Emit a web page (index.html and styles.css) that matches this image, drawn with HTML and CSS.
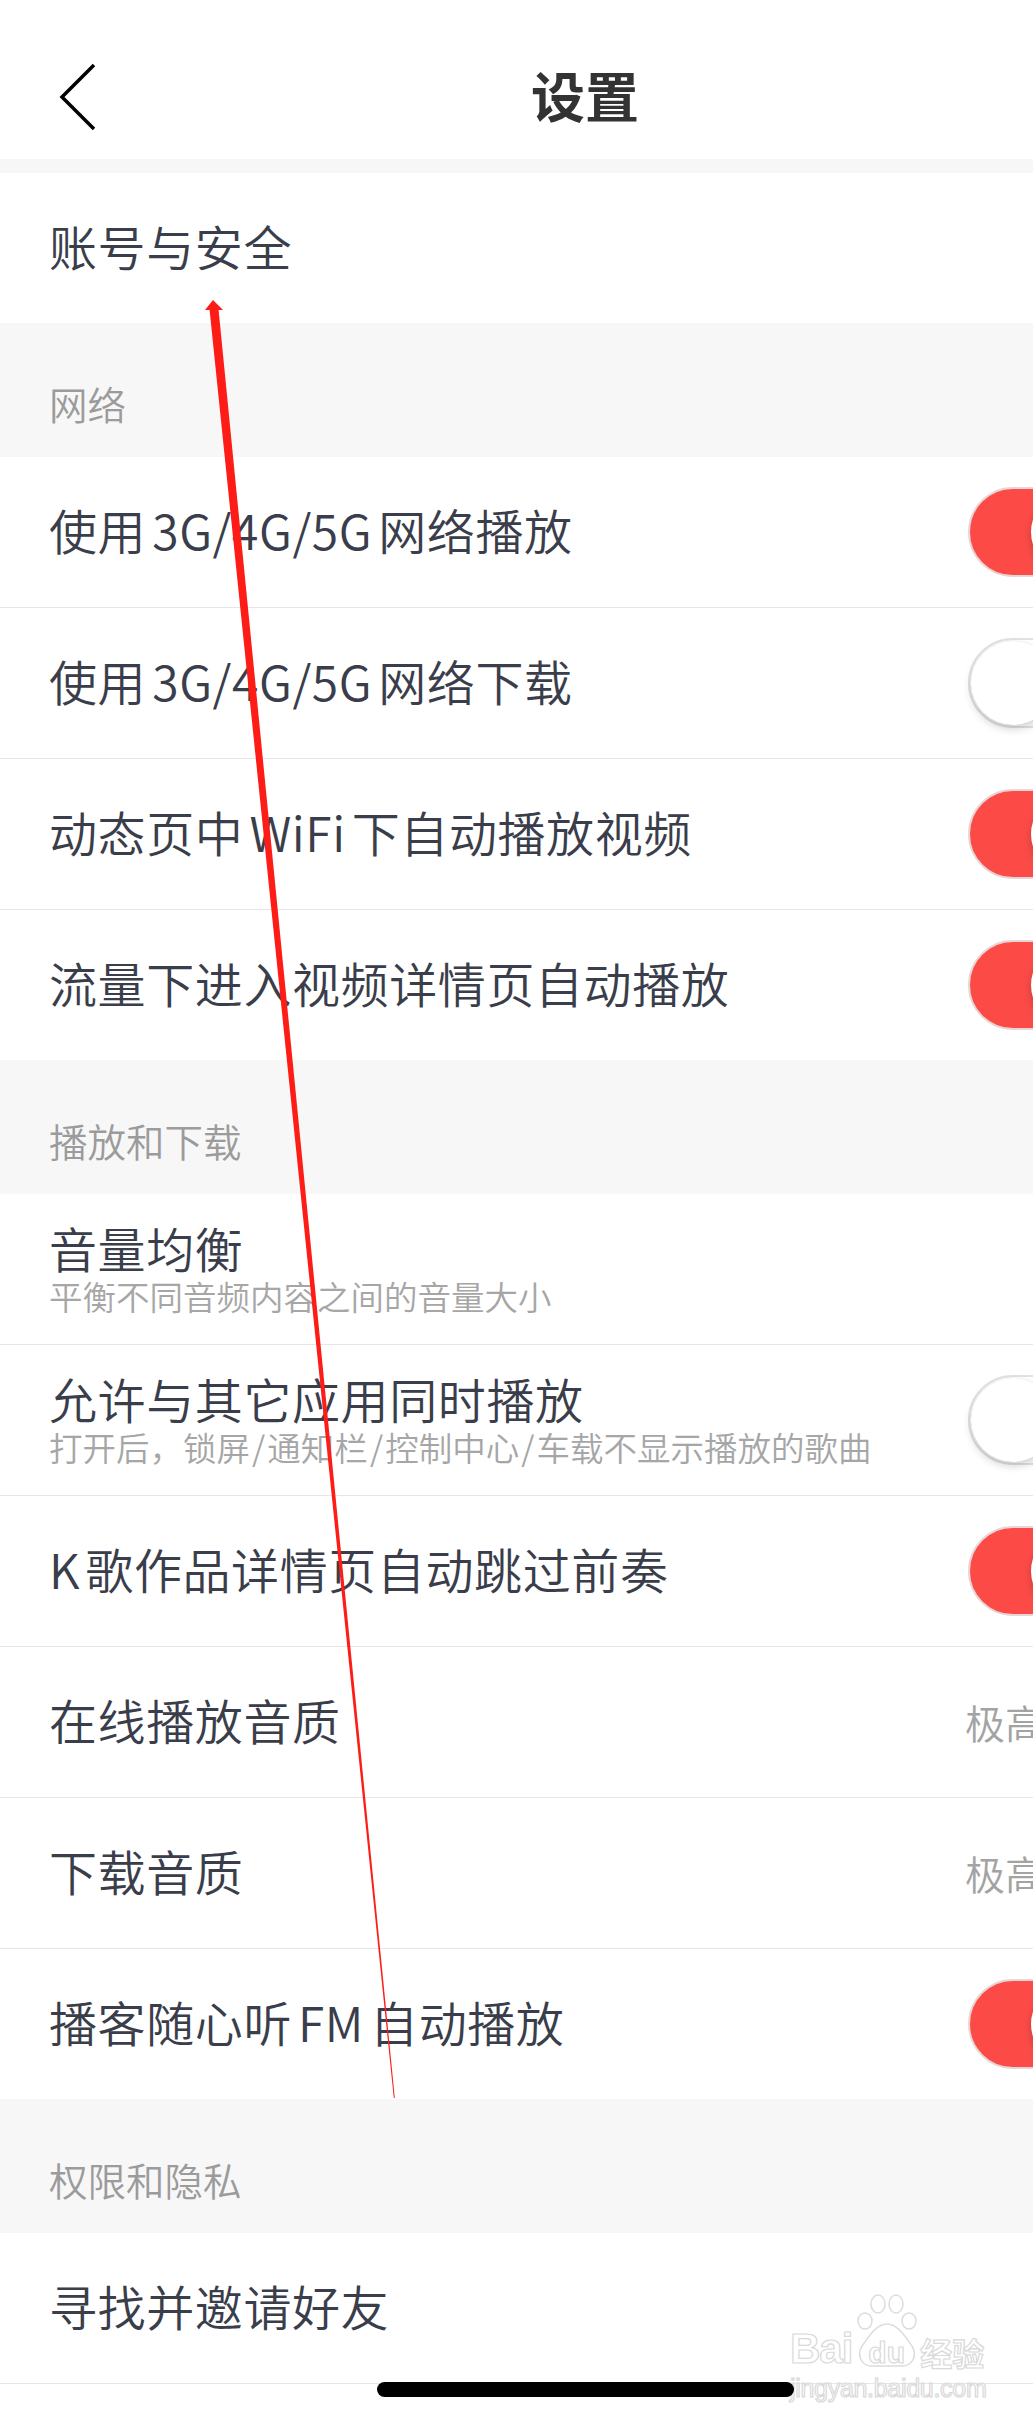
FILE: index.html
```html
<!DOCTYPE html>
<html lang="zh-CN">
<head>
<meta charset="UTF-8">
<title>设置</title>
<link rel="stylesheet" href="styles.css">
</head>
<body>
<div class="screen">
	<div class="nav">
		<span class="nav-back">
			<svg width="40" height="70" viewBox="0 0 40 70"><polyline points="36,3 4,35 36,67" fill="none" stroke="#000" stroke-width="3.5"/></svg>
		</span>
		<h1 class="nav-title">设置</h1>
		<span></span>
	</div>
	<div class="gap"></div>

	<ul class="group">
		<li class="row"><span class="row-label">账号与安全</span></li>
	</ul>

	<h3 class="section">网络</h3>
	<ul class="group">
		<li class="row"><span class="row-label">使用<i class="en">3G/4G/5G</i>网络播放</span><span class="switch on"></span></li>
		<li class="row"><span class="row-label">使用<i class="en">3G/4G/5G</i>网络下载</span><span class="switch"></span></li>
		<li class="row"><span class="row-label">动态页中<i class="en">WiFi</i>下自动播放视频</span><span class="switch on"></span></li>
		<li class="row"><span class="row-label">流量下进入视频详情页自动播放</span><span class="switch on"></span></li>
	</ul>

	<h3 class="section">播放和下载</h3>
	<ul class="group">
		<li class="row">
			<div class="row-text">
				<span class="row-title">音量均衡</span>
				<span class="row-sub">平衡不同音频内容之间的音量大小</span>
			</div>
		</li>
		<li class="row">
			<div class="row-text">
				<span class="row-title">允许与其它应用同时播放</span>
				<span class="row-sub">打开后，锁屏&#8202;/&#8202;通知栏&#8202;/&#8202;控制中心&#8202;/&#8202;车载不显示播放的歌曲</span>
			</div>
			<span class="switch"></span>
		</li>
		<li class="row"><span class="row-label"><i class="en k">K</i>歌作品详情页自动跳过前奏</span><span class="switch on"></span></li>
		<li class="row">
			<span class="row-label">在线播放音质</span>
			<span class="row-value">极高<svg width="20" height="36" viewBox="0 0 20 36"><polyline points="3,3 17,18 3,33" fill="none" stroke="#c8c8c8" stroke-width="3"/></svg></span>
		</li>
		<li class="row">
			<span class="row-label">下载音质</span>
			<span class="row-value">极高<svg width="20" height="36" viewBox="0 0 20 36"><polyline points="3,3 17,18 3,33" fill="none" stroke="#c8c8c8" stroke-width="3"/></svg></span>
		</li>
		<li class="row"><span class="row-label">播客随心听<i class="en">FM</i>自动播放</span><span class="switch on"></span></li>
	</ul>

	<h3 class="section">权限和隐私</h3>
	<ul class="group">
		<li class="row"><span class="row-label">寻找并邀请好友</span></li>
		<li class="row"></li>
	</ul>

	<!-- 红色箭头标注 -->
	<svg class="mark" width="1170" height="2421" viewBox="0 0 1170 2421">
		<polygon points="213,300 223,310 205,310" fill="#fd1c16"/>
		<polygon points="209.5,309 218.5,309 394.8,2098 393.8,2098" fill="#fd1c16"/>
	</svg>

	<div class="watermark">
		<div class="wm-top">
			<span class="wm-bai">Bai</span>
			<span class="wm-paw">
				<svg width="62" height="76" viewBox="0 0 62 76">
					<g fill="#fff" stroke="#dcdcdc" stroke-width="1.5">
						<ellipse cx="22" cy="10" rx="7" ry="9"/>
						<ellipse cx="40" cy="10" rx="7" ry="9"/>
						<ellipse cx="9" cy="27" rx="7" ry="8"/>
						<ellipse cx="53" cy="27" rx="7" ry="8"/>
						<path d="M31 30 C20 30 12 44 6 52 C0 62 6 72 16 72 L46 72 C56 72 62 62 56 52 C50 44 42 30 31 30 Z"/>
					</g>
				</svg>
				<span class="wm-du">du</span>
			</span>
			<span class="wm-jy">经验</span>
		</div>
		<div class="wm-url">jingyan.baidu.com</div>
	</div>
	<div class="home-bar"></div>
</div>
</body>
</html>
```

FILE: styles.css
```css
*{margin: 0;padding: 0;list-style: none;box-sizing: border-box;}
html,body{
	overflow: hidden;
	background: #fff;
}
.screen{
	width: 1170px;
	height: 2421px;
	position: relative;
	overflow: hidden;
	background: #fff;
	font-family: "Noto Sans CJK SC", "Noto Sans", sans-serif;
	color: #3a3d4a;
}
.nav{
	display: grid;
	grid-template-columns: 1fr auto 1fr;
	align-items: center;
	height: 159px;
	padding-top: 30px;
}
.nav-back{
	display: flex;
	margin-left: 58px;
	margin-top: 4px;
}
.nav-title{
	font-size: 54px;
	font-weight: 700;
	color: #333;
	line-height: 1;
}
.gap{
	height: 14px;
	background: #f7f7f7;
}
.group{background: #fff;}
.row{
	display: flex;
	align-items: center;
	height: 151px;
	padding: 0 52px 0 49px;
	border-bottom: 1px solid #e6e6e6;
}
.row:last-child{
	height: 150px;
	border-bottom: none;
}
.group:last-of-type .row:first-child{border-bottom: 1px solid #e6e6e6;}
.row-label,.row-title{
	flex: 1;
	font-size: 48px;
	font-weight: 350;
	letter-spacing: 0.6px;
	line-height: 52px;
	white-space: nowrap;
}
.row > .row-label{margin-bottom: 6px;}
.row-title{
	flex: none;
	line-height: 46px;
}
.en{
	font-style: normal;
	margin: 0 6px;
}
.en.k{margin: 0 5px 0 0;}
.row-text{
	flex: 1;
	display: flex;
	flex-direction: column;
}
.row-sub{
	font-size: 33.5px;
	font-weight: 350;
	line-height: 36px;
	margin-top: 8px;
	color: #a6a6a6;
	white-space: nowrap;
}
.row-value{
	display: flex;
	align-items: center;
	gap: 18px;
	margin-right: 35px;
	font-size: 40px;
	font-weight: 350;
	color: #a3a3a3;
}
.section{
	height: 134px;
	display: flex;
	align-items: flex-end;
	padding: 0 0 29px 49px;
	background: #f7f7f7;
	font-size: 38.5px;
	font-weight: 350;
	line-height: 50px;
	color: #9b9b9b;
}
.switch{
	width: 150px;
	height: 90px;
	border-radius: 45px;
	border: 2px solid #e2e2e2;
	background: #fff;
	position: relative;
	flex: none;
}
.switch:after{
	content: "";
	position: absolute;
	top: 1px;
	left: 1px;
	width: 84px;
	height: 84px;
	border-radius: 50%;
	background: #fff;
	box-shadow: 0 4px 8px rgba(0,0,0,0.18), 0 0 1px rgba(0,0,0,0.15);
}
.switch.on{
	background: #fc4b46;
	border-color: #e8d6d6;
}
.switch.on:after{
	left: auto;
	right: 1px;
}
.mark{
	position: absolute;
	top: 0;
	left: 0;
	pointer-events: none;
}
.watermark{
	position: absolute;
	left: 790px;
	top: 2306px;
	color: #fff;
	-webkit-text-stroke: 1.2px #d9d9d9;
	font-family: "Liberation Sans", Arial, sans-serif;
}
.wm-top{
	display: flex;
	align-items: flex-end;
	height: 64px;
}
.wm-bai{
	font-size: 42px;
	font-weight: 700;
	line-height: 1;
	letter-spacing: -1px;
}
.wm-paw{
	position: relative;
	display: flex;
	margin: 0 2px 0 4px;
}
.wm-paw svg{margin-top: -14px;}
.wm-du{
	position: absolute;
	left: 12px;
	bottom: 2px;
	font-size: 30px;
	font-weight: 700;
	line-height: 1;
}
.wm-jy{
	font-family: "Noto Sans CJK SC", sans-serif;
	font-size: 32px;
	font-weight: 700;
	line-height: 1;
	margin-bottom: 2px;
}
.wm-url{
	font-size: 25px;
	line-height: 28px;
	margin-top: 4px;
	letter-spacing: -0.3px;
}
.home-bar{
	position: absolute;
	left: 377px;
	top: 2382px;
	width: 417px;
	height: 15px;
	border-radius: 8px;
	background: #000;
}
```
